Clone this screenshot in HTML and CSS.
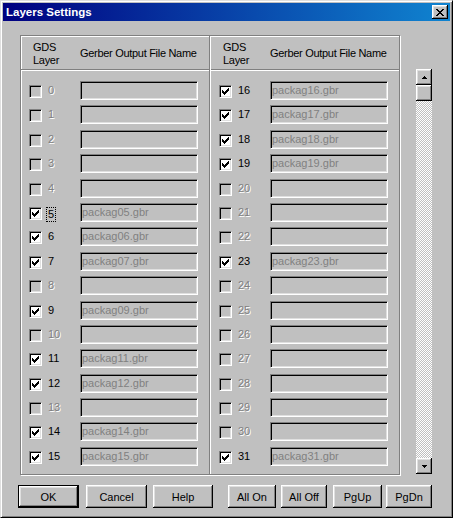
FILE: index.html
```html
<!DOCTYPE html>
<html>
<head>
<meta charset="utf-8">
<title>Layers Settings</title>
<link rel="stylesheet" href="styles.css">
</head>
<body>
<div class="window">
  <div class="titlebar">
    <span class="title-text">Layers Settings</span>
    <span class="close raised"><svg class="glyph" width="8" height="7" viewBox="0 0 8 7"><path d="M0 0h2v1H0zM6 0h2v1H6zM1 1h2v1H1zM5 1h2v1H5zM2 2h4v1H2zM3 3h2v1H3zM2 4h4v1H2zM1 5h2v1H1zM5 5h2v1H5zM0 6h2v1H0zM6 6h2v1H6z"/></svg></span>
  </div>
  <div class="main">
    <div class="group">
      <div class="col">
        <div class="head"><div class="h-gds">GDS<br>Layer</div><div class="h-name">Gerber Output File Name</div></div>
        <div class="rows">
          <div class="row"><span class="cb"></span><span class="num off">0</span><span class="field"></span></div>
          <div class="row"><span class="cb"></span><span class="num off">1</span><span class="field"></span></div>
          <div class="row"><span class="cb"></span><span class="num off">2</span><span class="field"></span></div>
          <div class="row"><span class="cb"></span><span class="num off">3</span><span class="field"></span></div>
          <div class="row"><span class="cb"></span><span class="num off">4</span><span class="field"></span></div>
          <div class="row"><span class="cb on"><svg class="chk" width="7" height="7" viewBox="0 0 7 7"><path d="M0 2h1v1h1v1h1V3h1V2h1V1h1V0h1v3H6v1H5v1H4v1H3v1H2V6H1V5H0z"/></svg></span><span class="num"><span class="focus">5</span></span><span class="field">packag05.gbr</span></div>
          <div class="row"><span class="cb on"><svg class="chk" width="7" height="7" viewBox="0 0 7 7"><path d="M0 2h1v1h1v1h1V3h1V2h1V1h1V0h1v3H6v1H5v1H4v1H3v1H2V6H1V5H0z"/></svg></span><span class="num">6</span><span class="field">packag06.gbr</span></div>
          <div class="row"><span class="cb on"><svg class="chk" width="7" height="7" viewBox="0 0 7 7"><path d="M0 2h1v1h1v1h1V3h1V2h1V1h1V0h1v3H6v1H5v1H4v1H3v1H2V6H1V5H0z"/></svg></span><span class="num">7</span><span class="field">packag07.gbr</span></div>
          <div class="row"><span class="cb"></span><span class="num off">8</span><span class="field"></span></div>
          <div class="row"><span class="cb on"><svg class="chk" width="7" height="7" viewBox="0 0 7 7"><path d="M0 2h1v1h1v1h1V3h1V2h1V1h1V0h1v3H6v1H5v1H4v1H3v1H2V6H1V5H0z"/></svg></span><span class="num">9</span><span class="field">packag09.gbr</span></div>
          <div class="row"><span class="cb"></span><span class="num off">10</span><span class="field"></span></div>
          <div class="row"><span class="cb on"><svg class="chk" width="7" height="7" viewBox="0 0 7 7"><path d="M0 2h1v1h1v1h1V3h1V2h1V1h1V0h1v3H6v1H5v1H4v1H3v1H2V6H1V5H0z"/></svg></span><span class="num">11</span><span class="field">packag11.gbr</span></div>
          <div class="row"><span class="cb on"><svg class="chk" width="7" height="7" viewBox="0 0 7 7"><path d="M0 2h1v1h1v1h1V3h1V2h1V1h1V0h1v3H6v1H5v1H4v1H3v1H2V6H1V5H0z"/></svg></span><span class="num">12</span><span class="field">packag12.gbr</span></div>
          <div class="row"><span class="cb"></span><span class="num off">13</span><span class="field"></span></div>
          <div class="row"><span class="cb on"><svg class="chk" width="7" height="7" viewBox="0 0 7 7"><path d="M0 2h1v1h1v1h1V3h1V2h1V1h1V0h1v3H6v1H5v1H4v1H3v1H2V6H1V5H0z"/></svg></span><span class="num">14</span><span class="field">packag14.gbr</span></div>
          <div class="row"><span class="cb on"><svg class="chk" width="7" height="7" viewBox="0 0 7 7"><path d="M0 2h1v1h1v1h1V3h1V2h1V1h1V0h1v3H6v1H5v1H4v1H3v1H2V6H1V5H0z"/></svg></span><span class="num">15</span><span class="field">packag15.gbr</span></div>
        </div>
      </div>
      <div class="divider"></div>
      <div class="col">
        <div class="head"><div class="h-gds">GDS<br>Layer</div><div class="h-name">Gerber Output File Name</div></div>
        <div class="rows">
          <div class="row"><span class="cb on"><svg class="chk" width="7" height="7" viewBox="0 0 7 7"><path d="M0 2h1v1h1v1h1V3h1V2h1V1h1V0h1v3H6v1H5v1H4v1H3v1H2V6H1V5H0z"/></svg></span><span class="num">16</span><span class="field">packag16.gbr</span></div>
          <div class="row"><span class="cb on"><svg class="chk" width="7" height="7" viewBox="0 0 7 7"><path d="M0 2h1v1h1v1h1V3h1V2h1V1h1V0h1v3H6v1H5v1H4v1H3v1H2V6H1V5H0z"/></svg></span><span class="num">17</span><span class="field">packag17.gbr</span></div>
          <div class="row"><span class="cb on"><svg class="chk" width="7" height="7" viewBox="0 0 7 7"><path d="M0 2h1v1h1v1h1V3h1V2h1V1h1V0h1v3H6v1H5v1H4v1H3v1H2V6H1V5H0z"/></svg></span><span class="num">18</span><span class="field">packag18.gbr</span></div>
          <div class="row"><span class="cb on"><svg class="chk" width="7" height="7" viewBox="0 0 7 7"><path d="M0 2h1v1h1v1h1V3h1V2h1V1h1V0h1v3H6v1H5v1H4v1H3v1H2V6H1V5H0z"/></svg></span><span class="num">19</span><span class="field">packag19.gbr</span></div>
          <div class="row"><span class="cb"></span><span class="num off">20</span><span class="field"></span></div>
          <div class="row"><span class="cb"></span><span class="num off">21</span><span class="field"></span></div>
          <div class="row"><span class="cb"></span><span class="num off">22</span><span class="field"></span></div>
          <div class="row"><span class="cb on"><svg class="chk" width="7" height="7" viewBox="0 0 7 7"><path d="M0 2h1v1h1v1h1V3h1V2h1V1h1V0h1v3H6v1H5v1H4v1H3v1H2V6H1V5H0z"/></svg></span><span class="num">23</span><span class="field">packag23.gbr</span></div>
          <div class="row"><span class="cb"></span><span class="num off">24</span><span class="field"></span></div>
          <div class="row"><span class="cb"></span><span class="num off">25</span><span class="field"></span></div>
          <div class="row"><span class="cb"></span><span class="num off">26</span><span class="field"></span></div>
          <div class="row"><span class="cb"></span><span class="num off">27</span><span class="field"></span></div>
          <div class="row"><span class="cb"></span><span class="num off">28</span><span class="field"></span></div>
          <div class="row"><span class="cb"></span><span class="num off">29</span><span class="field"></span></div>
          <div class="row"><span class="cb"></span><span class="num off">30</span><span class="field"></span></div>
          <div class="row"><span class="cb on"><svg class="chk" width="7" height="7" viewBox="0 0 7 7"><path d="M0 2h1v1h1v1h1V3h1V2h1V1h1V0h1v3H6v1H5v1H4v1H3v1H2V6H1V5H0z"/></svg></span><span class="num">31</span><span class="field">packag31.gbr</span></div>
        </div>
      </div>
    </div>
    <div class="scroll">
      <div class="sbtn raised"><svg class="glyph" width="5" height="3" viewBox="0 0 5 3"><path d="M2 0h1v1H2zM1 1h3v1H1zM0 2h5v1H0z"/></svg></div>
      <div class="thumb raised"></div>
      <div class="track"></div>
      <div class="sbtn raised"><svg class="glyph" width="5" height="3" viewBox="0 0 5 3"><path d="M0 0h5v1H0zM1 1h3v1H1zM2 2h1v1H2z"/></svg></div>
    </div>
  </div>
  <div class="buttons">
    <button class="btn default b-ok">OK</button>
    <button class="btn raised b-cancel">Cancel</button>
    <button class="btn raised b-help">Help</button>
    <button class="btn raised b-allon">All On</button>
    <button class="btn raised b-alloff">All Off</button>
    <button class="btn raised b-pgup">PgUp</button>
    <button class="btn raised b-pgdn">PgDn</button>
  </div>
</div>
</body>
</html>
```
FILE: styles.css
```css
html, body {
  margin: 0;
  padding: 0;
  background: #c0c0c0;
}
body {
  width: 453px;
  height: 518px;
  overflow: hidden;
}
.window {
  box-sizing: border-box;
  width: 453px;
  height: 518px;
  background: #c0c0c0;
  border: 1px solid;
  border-color: #dfdfdf #000 #000 #dfdfdf;
  box-shadow: inset 1px 1px 0 #fff, inset -1px -1px 0 #808080;
  padding: 2px;
  font-family: "Liberation Sans", Arial, sans-serif;
  font-size: 11px;
  color: #000;
  display: flex;
  flex-direction: column;
}
.raised {
  box-sizing: border-box;
  background: #c0c0c0;
  box-shadow: inset -1px -1px 0 #000, inset 1px 1px 0 #fff, inset -2px -2px 0 #808080, inset 2px 2px 0 #dfdfdf;
}
.glyph {
  display: block;
  shape-rendering: crispEdges;
  fill: #000;
}
.titlebar {
  height: 18px;
  display: flex;
  align-items: center;
  padding-left: 3px;
  background: linear-gradient(to right, #000080, #1084d0);
}
.title-text {
  flex: 1;
  color: #fff;
  font-weight: bold;
  font-size: 11.5px;
  line-height: 18px;
  white-space: nowrap;
}
.close {
  width: 16px;
  height: 14px;
  margin-right: 2px;
  display: flex;
  align-items: center;
  justify-content: center;
  padding-top: 1px;
}
.main {
  display: flex;
  align-items: flex-start;
  margin-top: 14px;
  margin-left: 17px;
}
.group {
  box-sizing: border-box;
  width: 380px;
  height: 440px;
  border: 1px solid #808080;
  box-shadow: 1px 1px 0 #fff, inset 1px 1px 0 #fff;
  display: flex;
}
.col {
  width: 188px;
  display: flex;
  flex-direction: column;
}
.divider {
  width: 0;
  border-left: 1px solid #808080;
  border-right: 1px solid #fff;
}
.head {
  box-sizing: border-box;
  height: 34px;
  padding-top: 2px;
  border-bottom: 1px solid #808080;
  display: flex;
  align-items: center;
  letter-spacing: -0.3px;
  line-height: 13px;
}
.h-gds {
  width: 47px;
  padding-left: 12px;
}
.h-name {
  white-space: nowrap;
}
.rows {
  border-top: 1px solid #fff;
  padding-top: 8px;
  display: grid;
  grid-template-rows: repeat(16, 24.4px);
}
.row {
  display: flex;
  align-items: flex-start;
  padding-left: 8px;
}
.cb {
  box-sizing: border-box;
  width: 13px;
  height: 13px;
  margin-top: 6px;
  padding: 2px;
  border: 1px solid;
  border-color: #808080 #fff #fff #808080;
  box-shadow: inset 1px 1px 0 #000, inset -1px -1px 0 #dfdfdf;
  background: #c0c0c0;
}
.cb.on {
  background: #fff;
}
.chk {
  display: block;
  shape-rendering: crispEdges;
  fill: #000;
}
.num {
  width: 32px;
  margin-left: 6px;
  margin-top: 5px;
  line-height: 13px;
  display: flex;
  align-items: flex-start;
}
.num.off {
  color: #808080;
  text-shadow: 1px 1px 0 #fff;
}
.focus {
  border: 1px dotted #000;
  margin-left: -2px;
  margin-top: 1px;
  padding: 0 1px;
  line-height: 13px;
}
.field {
  box-sizing: border-box;
  width: 118px;
  height: 19px;
  margin-top: 2px;
  padding-left: 1px;
  border: 1px solid;
  border-color: #808080 #fff #fff #808080;
  box-shadow: inset 1px 1px 0 #000, inset -1px -1px 0 #dfdfdf;
  color: #808080;
  line-height: 17px;
  white-space: nowrap;
  overflow: hidden;
}
.scroll {
  width: 16px;
  height: 405px;
  margin-left: 16px;
  margin-top: 34px;
  display: flex;
  flex-direction: column;
}
.sbtn {
  height: 16px;
  display: flex;
  align-items: center;
  justify-content: center;
}
.thumb {
  height: 16px;
}
.track {
  flex: 1;
  background: repeating-conic-gradient(#fff 0% 25%, #c0c0c0 0% 50%) 0 0 / 2px 2px;
}
.buttons {
  display: flex;
  margin-top: 10px;
  margin-left: 15px;
}
.btn {
  box-sizing: border-box;
  height: 23px;
  padding: 0;
  margin: 0;
  border: 0;
  font-family: "Liberation Sans", Arial, sans-serif;
  font-size: 11px;
  color: #000;
  display: flex;
  align-items: center;
  justify-content: center;
  background: #c0c0c0;
}
.btn.default {
  border: 1px solid #000;
  box-shadow: inset -1px -1px 0 #000, inset 1px 1px 0 #fff, inset -2px -2px 0 #808080, inset 2px 2px 0 #dfdfdf;
}
.b-ok { width: 61px; }
.b-cancel { width: 61px; margin-left: 7px; }
.b-help { width: 60px; margin-left: 6px; }
.b-allon { width: 48px; margin-left: 15px; }
.b-alloff { width: 46px; margin-left: 5px; }
.b-pgup { width: 49px; margin-left: 6px; }
.b-pgdn { width: 46px; margin-left: 4px; }
```
